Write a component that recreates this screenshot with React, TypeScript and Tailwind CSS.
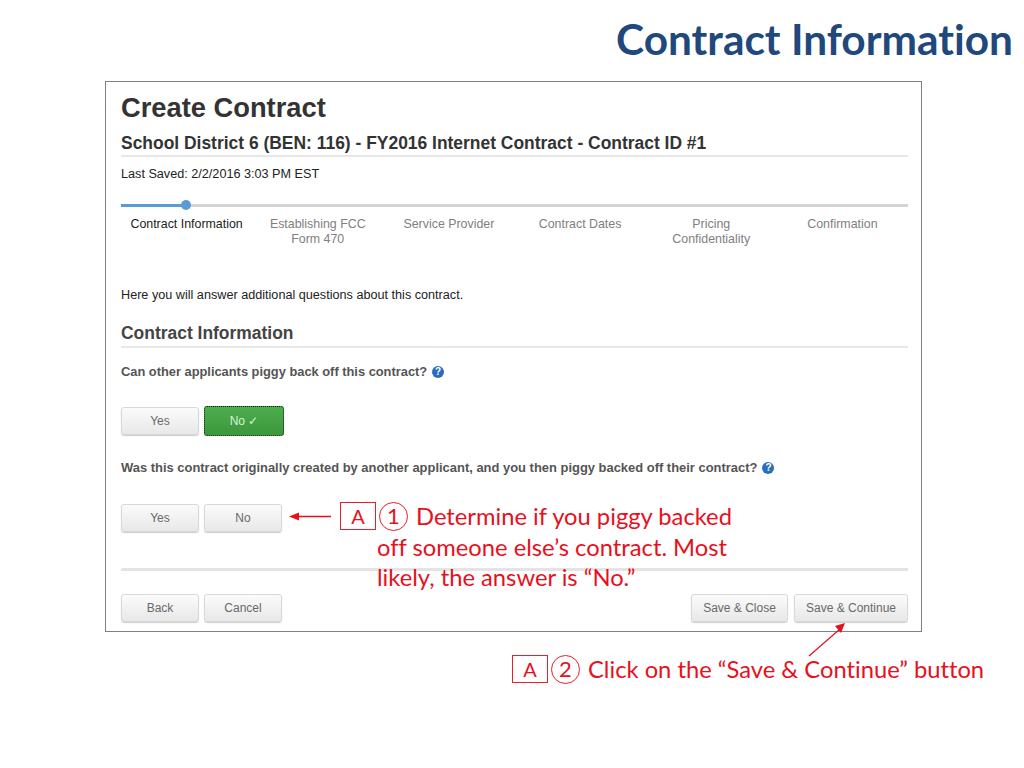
import React from "react";

const steps = [
  ["Contract Information"],
  ["Establishing FCC", "Form 470"],
  ["Service Provider"],
  ["Contract Dates"],
  ["Pricing", "Confidentiality"],
  ["Confirmation"],
];

function Btn({ label, className = "" }: { label: string; className?: string }) {
  return (
    <button
      className={`h-[28px] rounded-[3px] border border-[#d8d8d8] bg-gradient-to-b from-[#fbfbfb] to-[#e8e8e8] text-[12px] text-[#6a6a6a] shadow-[0_1px_1px_rgba(0,0,0,0.2)] ${className}`}
    >
      {label}
    </button>
  );
}

function Help() {
  return (
    <span className="ml-[5px] inline-flex h-[12px] w-[12px] items-center justify-center rounded-full bg-[#2a6ebb] text-[10px] font-bold leading-none text-white">
      ?
    </span>
  );
}

function Note({ n }: { n: string }) {
  return (
    <>
      <span className="flex h-[28px] w-[36px] items-center justify-center border border-[#e8202a] text-[20px] leading-none">
        A
      </span>
      <span className="ml-[3px] flex h-[29px] w-[29px] items-center justify-center rounded-full border border-[#e8202a] text-[22px] leading-none">
        {n}
      </span>
    </>
  );
}

export default function App() {
  return (
    <div className="relative h-[768px] w-[1024px] overflow-hidden bg-white font-['Liberation_Sans',sans-serif]">
      <h1 className="h-[81px] pr-[11px] pt-[14px] text-right font-['Lato',sans-serif] text-[42.4px] font-bold leading-[50px] text-[#1f497d] [font-variant-ligatures:none]">
        Contract Information
      </h1>

      <div className="ml-[105px] h-[551px] w-[817px] border border-[#808080] pl-[15px] pr-[13px]">
        <h2 className="pt-[10px] text-[27.3px] font-bold leading-[32px] text-[#333]">Create Contract</h2>
        <h3 className="mt-[8px] text-[17.45px] font-bold leading-[22px] text-[#333]">
          School District 6 (BEN: 116) - FY2016 Internet Contract - Contract ID #1
        </h3>
        <div className="mt-[1px] h-[2px] bg-[#e8e8e8]" />
        <p className="mt-[9px] text-[12.65px] leading-[16px] text-[#222]">Last Saved: 2/2/2016 3:03 PM EST</p>

        <div className="relative mt-[22px] h-[3px] bg-[#d4d4d4]">
          <div className="h-[3px] w-[65px] bg-[#5b9bd5]" />
          <div className="absolute left-[60px] top-[-4px] h-[10px] w-[10px] rounded-full bg-[#5b9bd5]" />
        </div>

        <div className="mt-[10px] grid h-[63px] grid-cols-6 text-center text-[12.4px] leading-[15px] text-[#808080]">
          {steps.map((lines, i) => (
            <div key={i} className={i === 0 ? "text-[#222]" : ""}>
              {lines.map((l) => (
                <div key={l}>{l}</div>
              ))}
            </div>
          ))}
        </div>

        <p className="mt-[7px] text-[12.65px] leading-[16px] text-[#222]">
          Here you will answer additional questions about this contract.
        </p>

        <h4 className="mt-[19px] text-[17.45px] font-bold leading-[22px] text-[#444]">Contract Information</h4>
        <div className="mt-[2px] h-[2px] bg-[#e8e8e8]" />

        <p className="mt-[16px] flex items-center text-[12.85px] font-bold leading-[16px] text-[#555]">
          Can other applicants piggy back off this contract?
          <Help />
        </p>
        <div className="mt-[27px] flex gap-[5px]">
          <Btn label="Yes" className="w-[78px]" />
          <button className="h-[30px] w-[80px] -translate-y-[1px] rounded-[3px] border border-dotted border-[#0b2a0b] bg-gradient-to-b from-[#4cae4c] to-[#3d963d] text-[12px] text-[#d8f0d8]">
            No ✓
          </button>
        </div>

        <p className="mt-[23px] flex items-center text-[12.95px] font-bold leading-[16px] text-[#555]">
          Was this contract originally created by another applicant, and you then piggy backed off their contract?
          <Help />
        </p>
        <div className="mt-[28px] flex gap-[5px]">
          <Btn label="Yes" className="w-[78px]" />
          <Btn label="No" className="w-[78px]" />
        </div>

        <div className="mt-[36px] h-[3px] bg-[#e4e4e4]" />

        <div className="mt-[23px] flex gap-[5px]">
          <Btn label="Back" className="w-[78px]" />
          <Btn label="Cancel" className="w-[78px]" />
          <Btn label="Save & Close" className="ml-auto mr-[1px] w-[97px]" />
          <Btn label="Save & Continue" className="w-[114px]" />
        </div>
      </div>

      {/* annotations over the screenshot */}
      <div className="font-['Lato',sans-serif] text-[23.75px] leading-[30px] text-[#e8101c] [font-variant-ligatures:none]">
        <div className="absolute left-[340px] top-[501px] flex items-center">
          <Note n="1" />
          <span className="ml-[8px]">Determine if you piggy backed</span>
        </div>
        <div className="absolute left-[377px] top-[532px] w-[380px]">
          off someone else’s contract. Most
          <br />
          likely, the answer is “No.”
        </div>
        <div className="absolute left-[512px] top-[654px] flex items-center whitespace-nowrap">
          <Note n="2" />
          <span className="ml-[8px]">Click on the “Save &amp; Continue” button</span>
        </div>
      </div>

      <svg className="absolute left-0 top-0" width="1024" height="768" fill="none">
        <path d="M331 516.5H298" stroke="#e8101c" strokeWidth="1.3" />
        <path d="M289 516.5l10-4v8z" fill="#e8101c" />
        <path d="M809 656L840 629" stroke="#e8101c" strokeWidth="1.2" />
        <path d="M845 623l-4 10-6-7z" fill="#e8101c" />
      </svg>
    </div>
  );
}
